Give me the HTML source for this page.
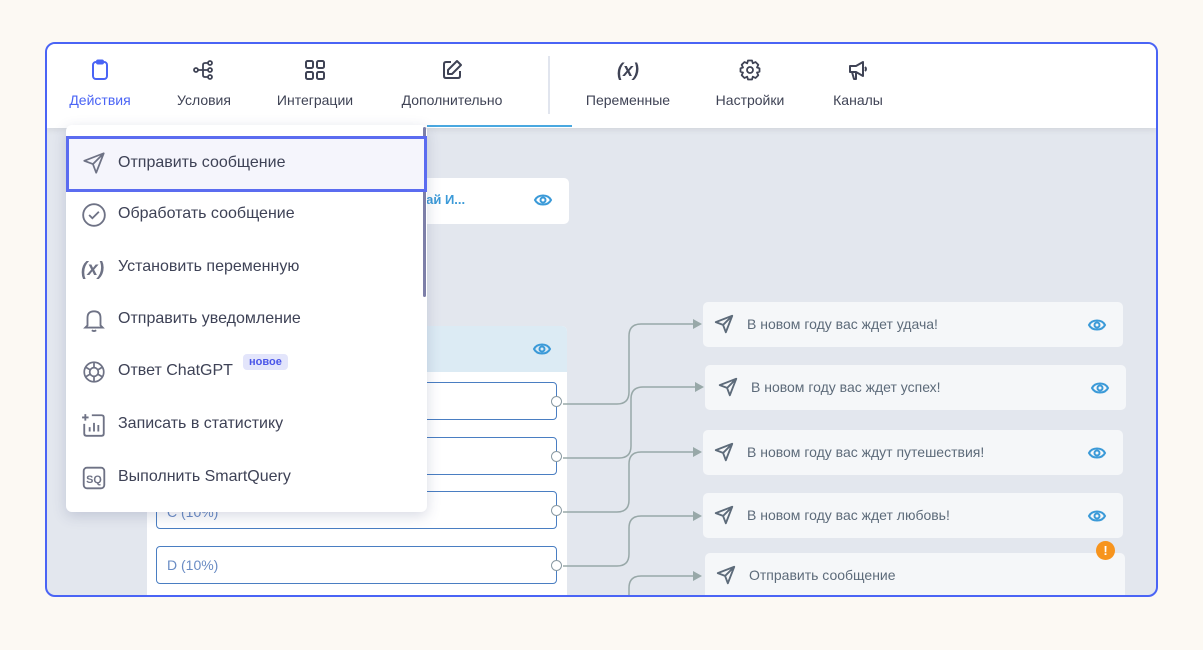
<!DOCTYPE html>
<html><head><meta charset="utf-8"><style>
*{box-sizing:border-box;margin:0;padding:0}
body{width:1203px;height:650px;background:#fcf9f3;font-family:"Liberation Sans","Noto Sans CJK SC",sans-serif;position:relative;overflow:hidden}
.frame{position:absolute;left:45px;top:42px;width:1113px;height:555px;border:2px solid #4a64f5;border-radius:10px;overflow:hidden;background:#e3e7ee}
.bar{position:absolute;left:0;top:0;width:100%;height:84px;background:#fff;box-shadow:0 2px 6px rgba(0,0,0,.08)}
.tab{position:absolute;top:0;height:84px;text-align:center;font-size:14px;color:#3f4355}
.tab svg{position:absolute;top:14px;left:50%;margin-left:-12px}
.tab span{position:absolute;top:48px;left:0;right:0;white-space:nowrap}
.a{position:absolute}
.card{position:absolute;background:#f5f7f9;border-radius:5px;font-size:14px;color:#5d6b7a}
.card .t{position:absolute;left:44px;top:14px}
.eye{position:absolute}
.btn{position:absolute;left:109px;width:401px;height:38px;border:1px solid #4a7ec2;border-radius:4px;background:#fff;font-size:14px;color:#6a8cc4}
.dot{position:absolute;right:-6px;top:13px;width:11px;height:11px;border:1px solid #8a9aa3;background:#fff;border-radius:50%}
.dd{position:absolute;left:19px;top:81px;width:361px;height:387px;background:#fff;border-radius:6px;box-shadow:0 4px 14px rgba(60,70,120,.2)}
.it{position:absolute;left:0;width:361px;height:53px;font-size:16px;color:#3e4256}
.it span{position:absolute;left:52px;top:17px;white-space:nowrap}
.it svg{position:absolute;left:15px;top:14px}
</style></head><body>
<div class="frame">
 <div class="card" style="left:358px;top:134px;width:164px;height:46px;background:#fff"><span style="position:absolute;left:10px;top:14px;color:#3b9ad8;font-weight:bold;font-size:13px">щай И...</span>
 <svg class="eye" style="left:128px;top:14px" width="20" height="16" viewBox="0 0 20 16"><path d="M2 8C5 2 15 2 18 8C15 14 5 14 2 8Z" fill="none" stroke="#3b9ad8" stroke-width="2"/><circle cx="10" cy="8" r="2.5" fill="none" stroke="#3b9ad8" stroke-width="2"/></svg></div>
 <div class="a" style="left:100px;top:282px;width:420px;height:280px;background:#fff;border-radius:5px">
  <div style="height:46px;background:#dcebf4;border-radius:5px 5px 0 0"></div>
  <svg class="eye" style="left:385px;top:15px" width="20" height="16" viewBox="0 0 20 16"><path d="M2 8C5 2 15 2 18 8C15 14 5 14 2 8Z" fill="none" stroke="#3b9ad8" stroke-width="2"/><circle cx="10" cy="8" r="2.5" fill="none" stroke="#3b9ad8" stroke-width="2"/></svg>
 </div>
 <div class="btn" style="top:338px"><div class="dot"></div></div>
 <div class="btn" style="top:393px"><div class="dot"></div></div>
 <div class="btn" style="top:447px"><span style="position:absolute;left:10px;top:12px">C (10%)</span><div class="dot"></div></div>
 <div class="btn" style="top:502px"><span style="position:absolute;left:10px;top:10px">D (10%)</span><div class="dot"></div></div>
 <svg class="a" style="left:0;top:0" width="1113" height="555">
  <g fill="none" stroke="#98a8a8" stroke-width="1.5">
   <path d="M516 360H570Q582 360 582 348V292Q582 280 594 280H652"/>
   <path d="M516 414H572Q584 414 584 402V355Q584 343 596 343H654"/>
   <path d="M516 468H570Q582 468 582 456V420Q582 408 594 408H652"/>
   <path d="M516 522H570Q582 522 582 510V484Q582 472 594 472H652"/>
   <path d="M582 555V544Q582 532 594 532H652"/>
  </g>
  <g fill="#98a8a8"><path d="M646 275L655 280L646 285Z"/><path d="M648 338L657 343L648 348Z"/><path d="M646 403L655 408L646 413Z"/><path d="M646 467L655 472L646 477Z"/><path d="M646 527L655 532L646 537Z"/></g>
 </svg>
 <div class="card" style="left:656px;top:258px;width:420px;height:45px"><svg class="a" style="left:10px;top:11px" width="22" height="22" viewBox="0 0 24 24"><path d="M21 3L3 10L11 13L14 21Z M21 3L11 13" fill="none" stroke="#5d6b7a" stroke-width="2" stroke-linejoin="round"/></svg><span class="t">В новом году вас ждет удача!</span><svg class="eye" style="left:384px;top:15px" width="20" height="16" viewBox="0 0 20 16"><path d="M2 8C5 2 15 2 18 8C15 14 5 14 2 8Z" fill="none" stroke="#3b9ad8" stroke-width="2"/><circle cx="10" cy="8" r="2.5" fill="none" stroke="#3b9ad8" stroke-width="2"/></svg></div>
 <div class="card" style="left:658px;top:321px;width:421px;height:45px"><svg class="a" style="left:12px;top:11px" width="22" height="22" viewBox="0 0 24 24"><path d="M21 3L3 10L11 13L14 21Z M21 3L11 13" fill="none" stroke="#5d6b7a" stroke-width="2" stroke-linejoin="round"/></svg><span class="t" style="left:46px">В новом году вас ждет успех!</span><svg class="eye" style="left:385px;top:15px" width="20" height="16" viewBox="0 0 20 16"><path d="M2 8C5 2 15 2 18 8C15 14 5 14 2 8Z" fill="none" stroke="#3b9ad8" stroke-width="2"/><circle cx="10" cy="8" r="2.5" fill="none" stroke="#3b9ad8" stroke-width="2"/></svg></div>
 <div class="card" style="left:656px;top:386px;width:420px;height:45px"><svg class="a" style="left:10px;top:11px" width="22" height="22" viewBox="0 0 24 24"><path d="M21 3L3 10L11 13L14 21Z M21 3L11 13" fill="none" stroke="#5d6b7a" stroke-width="2" stroke-linejoin="round"/></svg><span class="t">В новом году вас ждут путешествия!</span><svg class="eye" style="left:384px;top:15px" width="20" height="16" viewBox="0 0 20 16"><path d="M2 8C5 2 15 2 18 8C15 14 5 14 2 8Z" fill="none" stroke="#3b9ad8" stroke-width="2"/><circle cx="10" cy="8" r="2.5" fill="none" stroke="#3b9ad8" stroke-width="2"/></svg></div>
 <div class="card" style="left:656px;top:449px;width:420px;height:45px"><svg class="a" style="left:10px;top:11px" width="22" height="22" viewBox="0 0 24 24"><path d="M21 3L3 10L11 13L14 21Z M21 3L11 13" fill="none" stroke="#5d6b7a" stroke-width="2" stroke-linejoin="round"/></svg><span class="t">В новом году вас ждет любовь!</span><svg class="eye" style="left:384px;top:15px" width="20" height="16" viewBox="0 0 20 16"><path d="M2 8C5 2 15 2 18 8C15 14 5 14 2 8Z" fill="none" stroke="#3b9ad8" stroke-width="2"/><circle cx="10" cy="8" r="2.5" fill="none" stroke="#3b9ad8" stroke-width="2"/></svg></div>
 <div class="card" style="left:658px;top:509px;width:420px;height:50px"><svg class="a" style="left:10px;top:11px" width="22" height="22" viewBox="0 0 24 24"><path d="M21 3L3 10L11 13L14 21Z M21 3L11 13" fill="none" stroke="#5d6b7a" stroke-width="2" stroke-linejoin="round"/></svg><span class="t">Отправить сообщение</span></div>
 <div class="a" style="left:1049px;top:497px;width:19px;height:19px;border-radius:50%;background:#f7941d;color:#fff;font-weight:bold;font-size:13px;text-align:center;line-height:19px">!</div>

 <div class="bar">
  <div class="a" style="left:380px;top:81px;width:145px;height:2px;background:#4aa8e0"></div>
  <div class="a" style="left:501px;top:12px;width:2px;height:58px;background:#e1e5ee"></div>
  <div class="tab" style="left:13px;width:80px;color:#4a64f5"><svg width="24" height="24" viewBox="0 0 24 24" fill="none" stroke="#4a64f5" stroke-width="2"><rect x="5" y="4" width="14" height="17" rx="3"/><rect x="9" y="2.5" width="6" height="3" rx="1"/></svg><span>Действия</span></div>
  <div class="tab" style="left:117px;width:80px"><svg width="24" height="24" viewBox="0 0 24 24" fill="none" stroke="#3f4355" stroke-width="1.8"><circle cx="4" cy="12" r="2"/><circle cx="18" cy="5" r="2"/><circle cx="18" cy="12" r="2"/><circle cx="18" cy="19" r="2"/><path d="M6 12H16M11 12V7Q11 5 13 5H16M11 12V17Q11 19 13 19H16"/></svg><span>Условия</span></div>
  <div class="tab" style="left:218px;width:100px"><svg width="24" height="24" viewBox="0 0 24 24" fill="none" stroke="#3f4355" stroke-width="2"><rect x="3" y="3" width="7" height="7" rx="1.5"/><rect x="14" y="3" width="7" height="7" rx="1.5"/><rect x="3" y="14" width="7" height="7" rx="1.5"/><rect x="14" y="14" width="7" height="7" rx="1.5"/></svg><span>Интеграции</span></div>
  <div class="tab" style="left:345px;width:120px"><svg width="24" height="24" viewBox="0 0 24 24" fill="none" stroke="#3f4355" stroke-width="2" stroke-linejoin="round"><path d="M11 4H6Q4 4 4 6V18Q4 20 6 20H18Q20 20 20 18V13"/><path d="M17 3L21 7L12 16H8V12Z"/></svg><span>Дополнительно</span></div>
  <div class="tab" style="left:531px;width:100px"><svg width="30" height="24" viewBox="0 0 30 24" style="margin-left:-15px"><text x="15" y="18" text-anchor="middle" font-family="Liberation Sans,sans-serif" font-style="italic" font-weight="bold" font-size="18" fill="#3f4355">(x)</text></svg><span>Переменные</span></div>
  <div class="tab" style="left:663px;width:80px"><svg width="24" height="24" viewBox="0 0 24 24" fill="none" stroke="#3f4355" stroke-width="1.8" stroke-linejoin="round"><path d="M10 2.5H14L14.8 5.3L17.5 4L20.3 6.8L19 9.5L21.5 10.3V13.7L19 14.5L20.3 17.2L17.5 20L14.8 18.7L14 21.5H10L9.2 18.7L6.5 20L3.7 17.2L5 14.5L2.5 13.7V10.3L5 9.5L3.7 6.8L6.5 4L9.2 5.3Z"/><circle cx="12" cy="12" r="3"/></svg><span>Настройки</span></div>
  <div class="tab" style="left:771px;width:80px"><svg width="24" height="24" viewBox="0 0 24 24" fill="none" stroke="#3f4355" stroke-width="2" stroke-linejoin="round"><path d="M4 8H10L17 4V18L10 14H4Z"/><path d="M6 14L8 21H10L10 14"/><path d="M19 9Q21 11 19 13"/></svg><span>Каналы</span></div>
 </div>

 <div class="dd">
  <div class="a" style="right:1px;top:2px;width:3px;height:170px;background:#7d7fa8;border-radius:2px"></div>
  <div class="it" style="top:11px;height:56px;background:#f5f5fc;border:3px solid #5b6cf0"><svg style="left:12px;top:11px" width="26" height="26" viewBox="0 0 24 24"><path d="M21 3L3 10L11 13L14 21Z M21 3L11 13" fill="none" stroke="#6e7285" stroke-width="1.6" stroke-linejoin="round"/></svg><span style="left:49px;top:15px">Отправить сообщение</span></div>
  <div class="it" style="top:63px"><svg width="26" height="26" viewBox="0 0 24 24" fill="none" stroke="#6e7285" stroke-width="1.7"><circle cx="12" cy="12" r="10"/><path d="M7.5 12L10.5 15L16.5 9"/></svg><span>Обработать сообщение</span></div>
  <div class="it" style="top:116px"><svg width="30" height="26" viewBox="0 0 30 26"><text x="0" y="20" font-family="Liberation Sans,sans-serif" font-style="italic" font-weight="bold" font-size="19" fill="#6e7285">(x)</text></svg><span>Установить переменную</span></div>
  <div class="it" style="top:168px"><svg width="26" height="26" viewBox="0 0 24 24" fill="none" stroke="#6e7285" stroke-width="1.7"><path d="M6 17V10Q6 4 12 4Q18 4 18 10V17L20 19H4Z"/><path d="M10 21.5Q12 23 14 21.5"/></svg><span>Отправить уведомление</span></div>
  <div class="it" style="top:220px"><svg width="26" height="26" viewBox="0 0 24 24" fill="none" stroke="#6e7285" stroke-width="1.6"><circle cx="12" cy="12" r="9"/><circle cx="12" cy="12" r="4"/><path d="M12 3V8M12 16V21M4.2 7.5L8.5 10M15.5 14L19.8 16.5M4.2 16.5L8.5 14M15.5 10L19.8 7.5"/></svg><span>Ответ ChatGPT</span><div class="a" style="left:177px;top:9px;background:#e3e5fb;color:#4a55e8;font-size:11px;font-weight:bold;padding:2px 6px;border-radius:4px">новое</div></div>
  <div class="it" style="top:273px"><svg width="26" height="26" viewBox="0 0 24 24" fill="none" stroke="#6e7285" stroke-width="1.7"><path d="M4 2V8M1 5H7"/><path d="M10 3H19Q21 3 21 5V20Q21 22 19 22H5Q3 22 3 20V11"/><path d="M8 18V14M12 18V10M16 18V12"/></svg><span>Записать в статистику</span></div>
  <div class="it" style="top:326px"><svg width="26" height="26" viewBox="0 0 24 24" fill="none" stroke="#6e7285" stroke-width="1.7"><rect x="2.5" y="2.5" width="19" height="19" rx="3"/><text x="12" y="16.5" text-anchor="middle" font-family="Liberation Sans,sans-serif" font-weight="bold" font-size="10" fill="#6e7285" stroke="none">SQ</text></svg><span>Выполнить SmartQuery</span></div>
 </div>
</div>
</body></html>
